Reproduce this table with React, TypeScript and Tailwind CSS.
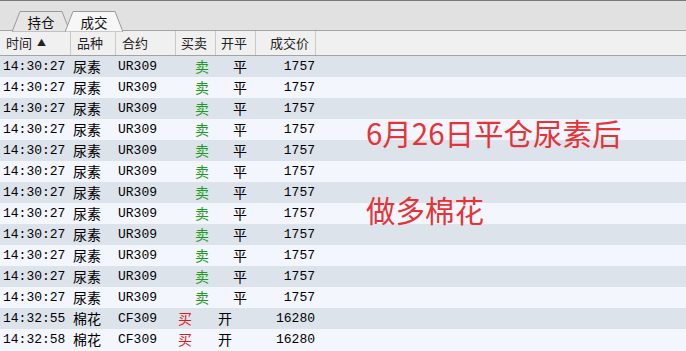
import React from "react";

type Trade = {
  time: string;
  name: string;
  code: string;
  side: "买" | "卖";
  flag: "开" | "平";
  price: string;
};

const sell: Trade = { time: "14:30:27", name: "尿素", code: "UR309", side: "卖", flag: "平", price: "1757" };

const trades: Trade[] = [
  ...Array.from({ length: 12 }, () => sell),
  { time: "14:32:55", name: "棉花", code: "CF309", side: "买", flag: "开", price: "16280" },
  { time: "14:32:58", name: "棉花", code: "CF309", side: "买", flag: "开", price: "16280" },
];

const cols = "grid grid-cols-[71px_45px_60px_40px_40px_60px_1fr]";
const mono = "font-['Liberation_Mono','Noto_Sans_CJK_SC',monospace]";
const cjk = "font-['Noto_Sans_CJK_SC',sans-serif]";

const Tab = ({ label, active, className }: { label: string; active?: boolean; className: string }) => (
  <div className={`absolute top-[10px] h-[21px] ${className}`}>
    <svg className="absolute inset-0" width="100%" height="21" viewBox="0 0 58 21" preserveAspectRatio="none">
      <polygon
        points="0,21 8,0.5 50,0.5 58,21"
        fill={active ? "#f7f7f7" : "#e6e6e6"}
        stroke="#9a9a9a"
        strokeWidth="1"
      />
    </svg>
    <span className={`relative flex h-full items-center justify-center pt-[1px] text-[13.5px] text-[#111] ${cjk}`}>
      {label}
    </span>
  </div>
);

const App = () => {
  return (
    <div className="relative h-[351px] w-[686px] overflow-hidden bg-[#f3f6fb]">
      {/* tab strip */}
      <div className="relative h-[30px] border-t border-[#777] bg-[#e1e1e1]">
        <Tab label="持仓" className="left-[12px] w-[58px]" />
        <Tab label="成交" active className="left-[65px] w-[58px]" />
      </div>

      {/* header */}
      <div className={`${cols} h-[26px] border-y border-[#a3a3a3] bg-[#f0f0f0] text-[13px] text-[#222] ${cjk}`}>
        <div className="flex items-center border-r border-[#c8c8c8] pl-[6px]">
          时间 <span className="ml-[5px] text-[9px]">▲</span>
        </div>
        <div className="flex items-center border-r border-[#c8c8c8] pl-[6px]">品种</div>
        <div className="flex items-center border-r border-[#c8c8c8] pl-[6px]">合约</div>
        <div className="flex items-center border-r border-[#c8c8c8] pl-[5px]">买卖</div>
        <div className="flex items-center border-r border-[#c8c8c8] pl-[5px]">开平</div>
        <div className="flex items-center justify-end border-r border-[#c8c8c8] pr-[6px]">成交价</div>
        <div />
      </div>

      {/* rows */}
      {trades.map((t, i) => (
        <div
          key={i}
          className={`${cols} h-[21px] items-center text-[13px] text-black ${mono} ${
            i % 2 === 0 ? "bg-[#dde3eb]" : "bg-[#f3f6fc]"
          }`}
        >
          <div className="pl-[3px]">{t.time}</div>
          <div className={`pl-[2px] text-[14px] ${cjk}`}>{t.name}</div>
          <div className="pl-[2px]">{t.code}</div>
          <div
            className={`text-[14px] ${cjk} ${
              t.side === "卖" ? "pl-[19px] text-[#1f9b1f]" : "pl-[2px] text-[#e01b1b]"
            }`}
          >
            {t.side}
          </div>
          <div className={`text-[14px] ${cjk} ${t.flag === "平" ? "pl-[17px]" : "pl-[2px]"}`}>{t.flag}</div>
          <div className="pr-[1px] text-right">{t.price}</div>
          <div />
        </div>
      ))}

      {/* annotation over the table */}
      <div className={`absolute left-[366px] top-[117px] text-[29.5px] leading-[30px] text-[#e63338] ${cjk}`}>
        6月26日平仓尿素后
      </div>
      <div className={`absolute left-[366px] top-[194px] text-[29.5px] leading-[30px] text-[#e63338] ${cjk}`}>
        做多棉花
      </div>
    </div>
  );
};

export default App;
